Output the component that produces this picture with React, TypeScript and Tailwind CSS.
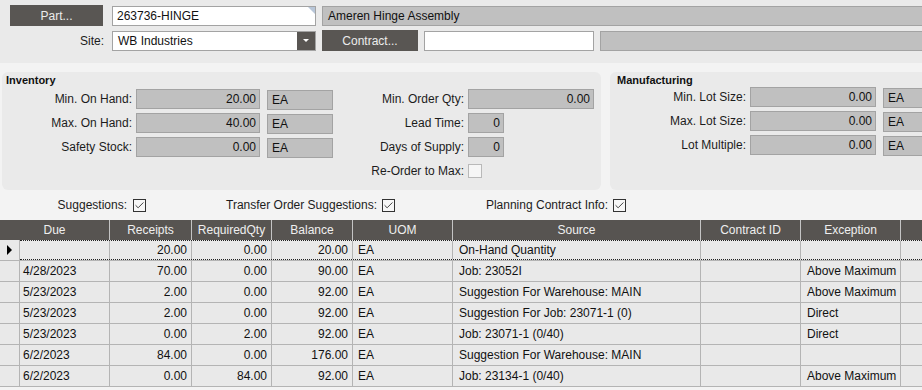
import { Check } from 'lucide-react';

const rows = [
  ['', '20.00', '0.00', '20.00', 'EA', 'On-Hand Quantity', '', ''],
  ['4/28/2023', '70.00', '0.00', '90.00', 'EA', 'Job: 23052I', '', 'Above Maximum'],
  ['5/23/2023', '2.00', '0.00', '92.00', 'EA', 'Suggestion For Warehouse: MAIN', '', 'Above Maximum'],
  ['5/23/2023', '2.00', '0.00', '92.00', 'EA', 'Suggestion For Job: 23071-1 (0)', '', 'Direct'],
  ['5/23/2023', '0.00', '2.00', '92.00', 'EA', 'Job: 23071-1 (0/40)', '', 'Direct'],
  ['6/2/2023', '84.00', '0.00', '176.00', 'EA', 'Suggestion For Warehouse: MAIN', '', ''],
  ['6/2/2023', '0.00', '84.00', '92.00', 'EA', 'Job: 23134-1 (0/40)', '', 'Above Maximum'],
];

const cols = [
  { w: 'w-[90px]', cell: 'justify-start pl-[3px]' },
  { w: 'w-[82px]', cell: 'justify-end pr-[4px]' },
  { w: 'w-[80px]', cell: 'justify-end pr-[4px]' },
  { w: 'w-[81px]', cell: 'justify-end pr-[4px]' },
  { w: 'w-[100px]', cell: 'justify-start pl-[5px]' },
  { w: 'w-[248px]', cell: 'justify-start pl-[6px]' },
  { w: 'w-[100px]', cell: 'justify-start pl-[6px]' },
  { w: 'w-[100px]', cell: 'justify-start pl-[6px]' },
];

function DarkButton({ label, className }: { label: string; className: string }) {
  return (
    <div className={`flex shrink-0 items-center justify-center bg-[#595653] text-[12px] text-[#ececec] ${className}`}>
      {label}
    </div>
  );
}

function Field({ value, className }: { value: string; className: string }) {
  return (
    <div className={`flex h-[20px] shrink-0 items-center border border-[#a3a3a3] bg-[#c0c0c0] text-[12px] text-[#111] ${className}`}>
      {value}
    </div>
  );
}

function CheckBox({ checked }: { checked: boolean }) {
  if (!checked) {
    return <div className="size-[14px] shrink-0 border border-[#b9b9b9] bg-[#f6f6f6]" />;
  }
  return (
    <div className="flex size-[13px] shrink-0 items-center justify-center border border-[#333] bg-[#f7f7f7]">
      <Check className="size-[11px] text-[#333]" strokeWidth={2} />
    </div>
  );
}

function FieldRow({
  label,
  labelW,
  value,
  fieldW,
  uom,
  uomW,
}: {
  label: string;
  labelW: string;
  value: string;
  fieldW: string;
  uom?: string;
  uomW?: string;
}) {
  return (
    <div className="flex h-[20px] items-center">
      <div className={`${labelW} shrink-0 pr-[4px] text-right text-[12px] text-[#1c1c1c]`}>{label}</div>
      <Field value={value} className={`${fieldW} justify-end pr-[3px]`} />
      {uom && <Field value={uom} className={`${uomW} ml-[7px] mt-[1px] pl-[4px]`} />}
    </div>
  );
}

export default function App() {
  return (
    <div className="h-[390px] w-[922px] overflow-hidden bg-[#f3f3f3] font-['Liberation_Sans',Arial,sans-serif]">
      {/* Header fields */}
      <div className="h-[63px] bg-[#eaeaea] pt-[5px]">
        <div className="flex h-[21px]">
          <DarkButton label="Part..." className="ml-[10px] w-[93px]" />
          <div className="relative ml-[9px] mt-[1px] flex h-[20px] w-[204px] shrink-0 items-center border border-[#a3a3a3] bg-white pl-[4px] text-[12px] text-[#111]">
            263736-HINGE
            <div className="absolute right-0 top-0 size-[7px] bg-[#b8c6d8] [clip-path:polygon(0_0,100%_0,100%_100%)]" />
          </div>
          <div className="ml-[6px] mt-[1px] flex h-[20px] w-[620px] shrink-0 items-center border border-[#a3a3a3] bg-[#c0c0c0] pl-[5px] text-[12px] text-[#111]">
            Ameren Hinge Assembly
          </div>
        </div>
        <div className="mt-[4px] flex h-[21px] items-center">
          <div className="w-[108px] shrink-0 pr-[4px] text-right text-[12px] text-[#1c1c1c]">Site:</div>
          <div className="ml-[4px] flex h-[20px] w-[204px] shrink-0 items-center border border-[#a3a3a3] bg-white text-[12px] text-[#111]">
            <span className="flex-1 pl-[5px]">WB Industries</span>
            <div className="flex h-full w-[18px] items-center justify-center bg-[#595653]">
              <div className="h-0 w-0 border-x-[3px] border-t-[3px] border-x-transparent border-t-white" />
            </div>
          </div>
          <DarkButton label="Contract..." className="ml-[6px] h-[21px] w-[96px]" />
          <div className="ml-[6px] h-[20px] w-[170px] shrink-0 border border-[#a3a3a3] bg-white" />
          <div className="ml-[6px] h-[20px] w-[330px] shrink-0 border border-[#a3a3a3] bg-[#c0c0c0]" />
        </div>
      </div>

      {/* Panels */}
      <div className="mt-[9px] flex h-[118px]">
        <div className="ml-[2px] w-[599px] shrink-0 rounded-[6px] bg-[#eaeaea]">
          <div className="h-[17px] pl-[4px] pt-[2px] text-[11px] font-bold leading-[13px] text-[#111]">Inventory</div>
          <div className="flex">
            <div className="flex flex-col gap-[4px]">
              <FieldRow label="Min. On Hand:" labelW="w-[134px]" value="20.00" fieldW="w-[124px]" uom="EA" uomW="w-[66px]" />
              <FieldRow label="Max. On Hand:" labelW="w-[134px]" value="40.00" fieldW="w-[124px]" uom="EA" uomW="w-[66px]" />
              <FieldRow label="Safety Stock:" labelW="w-[134px]" value="0.00" fieldW="w-[124px]" uom="EA" uomW="w-[66px]" />
            </div>
            <div className="flex flex-col gap-[4px]">
              <FieldRow label="Min. Order Qty:" labelW="w-[135px]" value="0.00" fieldW="w-[126px]" />
              <FieldRow label="Lead Time:" labelW="w-[135px]" value="0" fieldW="w-[36px]" />
              <FieldRow label="Days of Supply:" labelW="w-[135px]" value="0" fieldW="w-[36px]" />
              <div className="flex h-[20px] items-center">
                <div className="w-[135px] shrink-0 pr-[4px] text-right text-[12px] text-[#1c1c1c]">Re-Order to Max:</div>
                <CheckBox checked={false} />
              </div>
            </div>
          </div>
        </div>
        <div className="ml-[9px] w-[320px] shrink-0 rounded-[6px] bg-[#eaeaea]">
          <div className="h-[15px] pl-[7px] pt-[2px] text-[11px] font-bold leading-[13px] text-[#111]">Manufacturing</div>
          <div className="flex flex-col gap-[4px]">
            <FieldRow label="Min. Lot Size:" labelW="w-[140px]" value="0.00" fieldW="w-[126px]" uom="EA" uomW="w-[60px]" />
            <FieldRow label="Max. Lot Size:" labelW="w-[140px]" value="0.00" fieldW="w-[126px]" uom="EA" uomW="w-[60px]" />
            <FieldRow label="Lot Multiple:" labelW="w-[140px]" value="0.00" fieldW="w-[126px]" uom="EA" uomW="w-[60px]" />
          </div>
        </div>
      </div>

      {/* Options */}
      <div className="flex h-[30px] items-center text-[12px] text-[#1c1c1c]">
        <div className="w-[127px] shrink-0 text-right">Suggestions:</div>
        <div className="ml-[6px]"><CheckBox checked /></div>
        <div className="w-[231px] shrink-0 text-right">Transfer Order Suggestions:</div>
        <div className="ml-[5px]"><CheckBox checked /></div>
        <div className="w-[213px] shrink-0 text-right">Planning Contract Info:</div>
        <div className="ml-[5px]"><CheckBox checked /></div>
      </div>

      {/* Grid */}
      <div className="text-[12px]">
        <div className="flex h-[20px] bg-[#575451] text-[#efefef]">
          <div className="flex w-[110px] shrink-0 items-center justify-center border-r border-[#c4c4c4]">Due</div>
          {['Receipts', 'RequiredQty', 'Balance', 'UOM', 'Source', 'Contract ID', 'Exception'].map((h, i) => (
            <div key={h} className={`flex ${cols[i + 1].w} shrink-0 items-center justify-center border-r border-[#c4c4c4]`}>
              {h}
            </div>
          ))}
          <div className="flex-1" />
        </div>
        {rows.map((r, ri) => (
          <div key={ri} className="flex h-[21px] border-b border-[#b4b4b4] bg-[#e9e9e9] text-[#111]">
            <div className="flex w-[20px] shrink-0 items-center justify-center border-r border-[#b4b4b4]">
              {ri === 0 && (
                <div className="h-0 w-0 border-y-[5px] border-l-[5px] border-y-transparent border-l-black" />
              )}
            </div>
            <div className={`flex flex-1 ${ri === 0 ? 'border-y border-dotted border-[#222]' : ''}`}>
              {r.map((c, ci) => (
                <div key={ci} className={`flex ${cols[ci].w} shrink-0 items-center border-r border-[#b4b4b4] ${cols[ci].cell}`}>
                  {c}
                </div>
              ))}
              <div className="flex-1" />
            </div>
          </div>
        ))}
      </div>
    </div>
  );
}
